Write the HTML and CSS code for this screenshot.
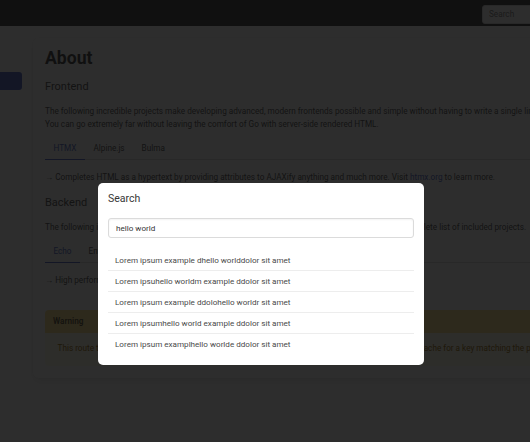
FILE: index.html
```html
<!DOCTYPE html>
<html lang="en">
<head>
<meta charset="utf-8">
<title>About</title>
<link rel="stylesheet" href="styles.css">
</head>
<body>
<div class="page">
  <nav class="navbar">
    <div class="nav-search"><input class="nav-input" type="text" placeholder="Search"></div>
  </nav>
  <div class="layout">
    <aside class="sidebar">
      <ul class="menu">
        <li><a class="menu-item active" href="#"></a></li>
      </ul>
    </aside>
    <main class="main">
      <section class="box">
        <h1 class="title">About</h1>
        <h2 class="subtitle">Frontend</h2>
        <p class="text before-tabs">The following incredible projects make developing advanced, modern frontends possible and simple without having to write a single line of JavaScript.<br>You can go extremely far without leaving the comfort of Go with server-side rendered HTML.</p>
        <div class="tabs">
          <a class="tab active" href="#">HTMX</a>
          <a class="tab" href="#">Alpine.js</a>
          <a class="tab" href="#">Bulma</a>
          <span class="tab-fill"></span>
        </div>
        <p class="text">→ Completes HTML as a hypertext by providing attributes to AJAXify anything and much more. Visit <a class="link" href="#">htmx.org</a> to learn more.</p>
        <h2 class="subtitle">Backend</h2>
        <p class="text before-tabs">The following incredible projects power the backend of this web app. Check the go.mod file for the complete list of included projects.</p>
        <div class="tabs">
          <a class="tab active" href="#">Echo</a>
          <a class="tab" href="#">Ent</a>
          <a class="tab" href="#">Asynq</a>
          <span class="tab-fill"></span>
        </div>
        <p class="text">→ High performance, extensible, minimalist Go web framework.</p>
        <article class="message">
          <div class="message-header">Warning</div>
          <div class="message-body">This route takes advantage of server-side caching. On every incoming request, the server checks its cache for a key matching the path.</div>
        </article>
      </section>
    </main>
  </div>
</div>

<div class="modal">
  <div class="modal-bg"></div>
  <div class="modal-card">
    <p class="modal-title">Search</p>
    <input class="search-input" type="text" value="hello world">
    <ul class="results">
      <li class="result">Lorem ipsum example dhello worlddolor sit amet</li>
      <li class="result">Lorem ipsuhello worldm example ddolor sit amet</li>
      <li class="result">Lorem ipsum example ddolohello worldr sit amet</li>
      <li class="result">Lorem ipsumhello world example ddolor sit amet</li>
      <li class="result">Lorem ipsum examplhello worlde ddolor sit amet</li>
    </ul>
  </div>
</div>
</body>
</html>
```
FILE: styles.css
```css
html, body {
  margin: 0;
  padding: 0;
  width: 530px;
  height: 442px;
  overflow: hidden;
  background: #ffffff;
  font-family: Roboto, "Noto Sans", "Liberation Sans", sans-serif;
  color: #4a4a4a;
}

.page {
  width: 1000px;
}

.navbar {
  height: 26px;
  background: #363636;
  display: flex;
  align-items: center;
  justify-content: flex-start;
  padding-left: 482px;
  box-sizing: border-box;
}

.nav-input {
  width: 80px;
  height: 19px;
  box-sizing: border-box;
  border: 1px solid #dbdbdb;
  border-radius: 3px;
  background: #fff;
  font-family: inherit;
  font-size: 8.2px;
  padding: 0 6px;
  color: #363636;
  outline: none;
}

.nav-input::placeholder {
  color: #7a7a7a;
}

.layout {
  display: flex;
  align-items: flex-start;
}

.sidebar {
  width: 33px;
  flex: none;
  padding-top: 46px;
}

.menu {
  list-style: none;
  margin: 0;
  padding: 0;
}

.menu-item {
  display: block;
  width: 22px;
  height: 18px;
  border-radius: 0 3px 3px 0;
}

.menu-item.active {
  background: #485fc7;
}

.main {
  flex: none;
  padding-top: 12px;
}

.box {
  background: #fff;
  border-radius: 6px;
  box-shadow: 0 4px 8px -1px rgba(10, 10, 10, 0.1), 0 0 0 1px rgba(10, 10, 10, 0.02);
  padding: 10px 12px 12px 12px;
  width: 900px;
  box-sizing: border-box;
}

.title {
  margin: 0 0 11px;
  font-size: 17.6px;
  line-height: 20px;
  font-weight: 700;
  color: #363636;
}

.subtitle {
  margin: 0 0 10.5px;
  font-size: 11px;
  line-height: 15px;
  font-weight: 400;
  color: #4a4a4a;
}

.text {
  margin: 0 0 11px;
  font-size: 8.2px;
  line-height: 13.4px;
}

.text.before-tabs {
  margin-bottom: 6.5px;
}

.link {
  color: #485fc7;
  text-decoration: none;
}

.tabs {
  display: flex;
  font-size: 8.2px;
  line-height: 13px;
  margin-bottom: 11px;
}

.tab {
  padding: 4px 8.5px;
  color: #4a4a4a;
  text-decoration: none;
  border-bottom: 1px solid #dbdbdb;
}

.tab.active {
  color: #485fc7;
  border-bottom-color: #485fc7;
}

.tab-fill {
  flex: 1;
  border-bottom: 1px solid #dbdbdb;
}

.message {
  margin-top: 22.5px;
  border-radius: 4px;
  font-size: 8.2px;
  background: #fffaeb;
}

.message-header {
  background: #ffe08a;
  color: rgba(0, 0, 0, 0.7);
  font-weight: 700;
  line-height: 11px;
  padding: 6px 8px;
  border-radius: 4px 4px 0 0;
}

.message-body {
  color: #946c00;
  line-height: 13.2px;
  padding: 9.5px 12.5px 11px;
  white-space: nowrap;
}

/* Modal */
.modal {
  position: fixed;
  inset: 0;
  display: flex;
  align-items: flex-start;
  justify-content: center;
  padding-top: 183px;
  padding-right: 8px;
}

.modal-bg {
  position: absolute;
  inset: 0;
  background: rgba(10, 10, 10, 0.86);
}

.modal-card {
  position: relative;
  width: 326px;
  height: 182px;
  box-sizing: border-box;
  background: #fff;
  border-radius: 5px;
  padding: 10px 10px 10px;
}

.modal-title {
  margin: 0;
  font-size: 10.5px;
  line-height: 12px;
  color: #363636;
}

.search-input {
  display: block;
  margin-top: 13px;
  width: 100%;
  height: 20px;
  box-sizing: border-box;
  border: 1px solid #dbdbdb;
  border-radius: 3px;
  box-shadow: inset 0 1px 2px rgba(10, 10, 10, 0.05);
  font-family: inherit;
  font-size: 8.1px;
  color: #363636;
  padding: 0 7px;
  outline: none;
}

.results {
  list-style: none;
  margin: 12px 0 0;
  padding: 0;
}

.result {
  font-size: 8.1px;
  line-height: 12px;
  padding: 4px 7px;
  color: #4a4a4a;
  border-bottom: 1px solid #ededed;
}

.result:last-child {
  border-bottom: none;
}
```
